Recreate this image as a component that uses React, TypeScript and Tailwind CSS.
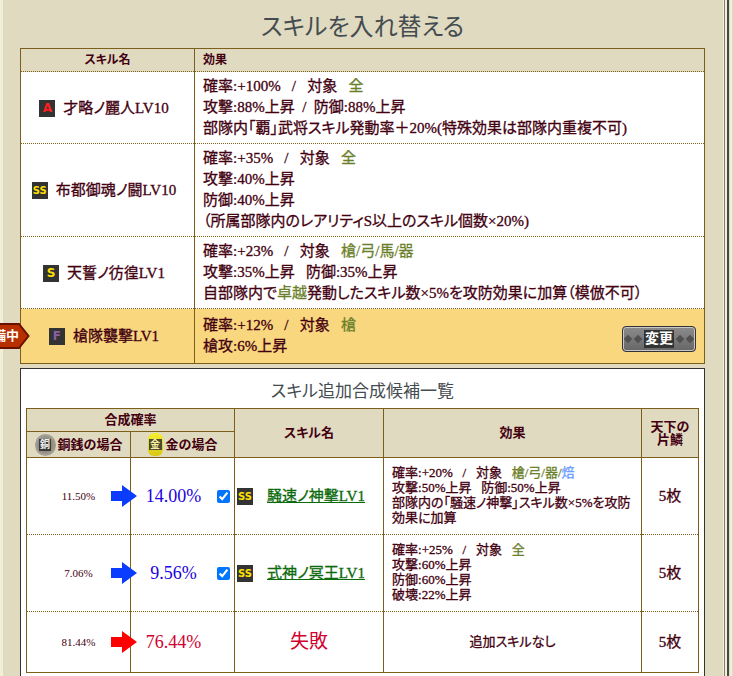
import type { ReactNode } from "react";

const rarityColor: Record<string, string> = {
  A: "text-[12px] text-[#ff2020]",
  SS: "text-[10px] text-[#ffe000]",
  S: "text-[12px] text-[#ffe000]",
  F: "text-[12px] text-[#8a5fa0]",
};

const border = "border-[#7b5f1a]";

function Badge({ rank }: { rank: string }) {
  return (
    <span
      className={`inline-flex h-[17px] w-[16px] shrink-0 items-center justify-center bg-[#333333] font-['DejaVu_Sans',sans-serif] font-bold [-webkit-text-stroke:0px] ${rarityColor[rank]}`}
    >
      {rank}
    </span>
  );
}

const Green = ({ children }: { children: ReactNode }) => <span className="text-[#6b7f2a]">{children}</span>;

function Arrow({ color }: { color: string }) {
  return (
    <svg width="26" height="22" viewBox="0 0 26 22" className="absolute right-[-7px] top-1/2 z-10 -translate-y-1/2">
      <path d="M0 6H11V0L26 11L11 22V16H0Z" fill={color} />
    </svg>
  );
}

function Coin({ kind }: { kind: "copper" | "gold" }) {
  if (kind === "copper") {
    return (
      <span className="inline-flex h-[22px] w-[21px] shrink-0 items-center justify-center rounded-full bg-[radial-gradient(circle,#8d867a_40%,#a8a39b_70%,#6e685e)]">
        <span className="flex h-[12px] w-[12px] items-center justify-center bg-[#3a3a34] text-[10px] leading-none font-bold text-[#f0f0f0]">
          銅
        </span>
      </span>
    );
  }
  return (
    <span className="inline-flex h-[23px] w-[15px] shrink-0 items-center justify-center rounded-[6px] bg-linear-to-b from-[#f8ee30] to-[#d8c810]">
      <span className="flex h-[11px] w-[13px] items-center justify-center bg-[#4a4a30] text-[10px] leading-none font-bold text-[#f8f0a0]">
        金
      </span>
    </span>
  );
}

function Diamonds() {
  return (
    <span className="flex gap-[4px]">
      <span className="h-[6px] w-[6px] rotate-45 bg-[#505050]" />
      <span className="h-[6px] w-[6px] rotate-45 bg-[#505050]" />
    </span>
  );
}

function SkillRow({ rank, name, h, children }: { rank: string; name: string; h: string; children: ReactNode }) {
  return (
    <tr className={`${h} border-t border-dotted ${border}`}>
      <td className={`border-r border-solid ${border} text-center`}>
        <span className="inline-flex items-center gap-[8px] pr-[7px]">
          <Badge rank={rank} />
          {name}
        </span>
      </td>
      <td className="pl-[8px]">{children}</td>
    </tr>
  );
}

function CandidateRow({
  low,
  high,
  color,
  arrow,
  checked,
  name,
  last,
  children,
  h,
}: {
  low: string;
  high: string;
  color: string;
  arrow: string;
  checked?: boolean;
  name?: ReactNode;
  last?: boolean;
  children: ReactNode;
  h: string;
}) {
  return (
    <tr className={`${h} ${last ? "" : `border-b border-dotted ${border}`}`}>
      <td className={`relative border-r border-solid ${border} text-center text-[11px] [-webkit-text-stroke:0px]`}>
        {low}
        <Arrow color={arrow} />
      </td>
      <td className={`border-r border-solid ${border}`}>
        <div className="flex items-center">
          <span className={`w-[85px] text-center text-[18px] [-webkit-text-stroke:0px] ${color}`}>{high}</span>
          {checked && <input type="checkbox" defaultChecked className="ml-[1px] h-[13px] w-[13px]" />}
        </div>
      </td>
      <td className={`border-r border-solid ${border}`}>{name}</td>
      <td className={`border-r border-solid ${border} pb-[2px] pl-[8px] text-[13px] leading-[15px]`}>{children}</td>
      <td className="text-center text-[15px]">5枚</td>
    </tr>
  );
}

function SkillLink({ name }: { name: string }) {
  return (
    <div className="flex items-center gap-[14px] pl-[2px]">
      <Badge rank="SS" />
      <a href="#" className="text-[15px] whitespace-nowrap text-[#0b6a0b] underline">
        {name}
      </a>
    </div>
  );
}

export default function App() {
  return (
    <div className="relative flex h-[676px] w-[733px] overflow-hidden bg-[#dfdac0] font-['Liberation_Serif','Noto_Sans_CJK_JP',serif] text-[#430010] [font-feature-settings:'palt'] [-webkit-text-stroke:0.3px]">
      <div className="w-[3px] shrink-0 bg-[#f0efd8]" />
      <main className="w-[702px] pl-[17px]">
        <h1 className="h-[48px] pt-[9px] text-center text-[24px] leading-[36px] font-normal text-[#444c50] [-webkit-text-stroke:0px]">
          スキルを入れ替える
        </h1>

        <table className={`w-[685px] table-fixed border-collapse border ${border} text-[15px] leading-[21px]`}>
          <thead>
            <tr className="h-[23px] text-[12px]">
              <th className={`w-[174px] border-r ${border} font-bold [-webkit-text-stroke:0px]`}>スキル名</th>
              <th className="pl-[8px] text-left font-bold [-webkit-text-stroke:0px]">効果</th>
            </tr>
          </thead>
          <tbody className="bg-white">
            <SkillRow rank="A" name="才略ノ麗人LV10" h="h-[72px]">
              確率:+100%&nbsp;&nbsp;&nbsp;/&nbsp;&nbsp;&nbsp;対象&nbsp;&nbsp;&nbsp;<Green>全</Green>
              <br />
              攻撃:88%上昇&nbsp;&nbsp;/&nbsp;&nbsp;防御:88%上昇
              <br />
              部隊内「覇」武将スキル発動率＋20%(特殊効果は部隊内重複不可)
            </SkillRow>
            <SkillRow rank="SS" name="布都御魂ノ闘LV10" h="h-[93px]">
              確率:+35%&nbsp;&nbsp;&nbsp;/&nbsp;&nbsp;&nbsp;対象&nbsp;&nbsp;&nbsp;<Green>全</Green>
              <br />
              攻撃:40%上昇
              <br />
              防御:40%上昇
              <br />
              （所属部隊内のレアリティS以上のスキル個数×20%)
            </SkillRow>
            <SkillRow rank="S" name="天誓ノ彷徨LV1" h="h-[72px]">
              確率:+23%&nbsp;&nbsp;&nbsp;/&nbsp;&nbsp;&nbsp;対象&nbsp;&nbsp;&nbsp;<Green>槍/弓/馬/器</Green>
              <br />
              攻撃:35%上昇&nbsp;&nbsp;&nbsp;防御:35%上昇
              <br />
              自部隊内で<Green>卓越</Green>発動したスキル数×5%を攻防効果に加算（模倣不可）
            </SkillRow>
            <tr className={`h-[55px] border-t border-dotted ${border} bg-[#f8d77f]`}>
              <td className={`border-r border-solid ${border} text-center`}>
                <span className="inline-flex items-center gap-[8px] pr-[7px]">
                  <Badge rank="F" />
                  槍隊襲撃LV1
                </span>
              </td>
              <td className="pl-[8px]">
                <div className="flex items-end justify-between pr-[8px]">
                  <div>
                    確率:+12%&nbsp;&nbsp;&nbsp;/&nbsp;&nbsp;&nbsp;対象&nbsp;&nbsp;&nbsp;<Green>槍</Green>
                    <br />
                    槍攻:6%上昇
                  </div>
                  <button className="mb-[5px] flex h-[26px] w-[74px] items-center justify-center gap-[3px] rounded-[4px] border border-[#333333] bg-linear-to-b from-[#8c8c8c] to-[#666666] text-[14px] font-bold text-white shadow-[inset_0_0_0_1px_#c8c8c8] [-webkit-text-stroke:0px]">
                    <Diamonds />
                    <span className="bg-[#333333] px-[1px] leading-[18px]">変更</span>
                    <Diamonds />
                  </button>
                </div>
              </td>
            </tr>
          </tbody>
        </table>

        <section className="mt-[4px] w-[685px] border border-[#333333] bg-white px-[5px] pb-[20px]">
          <h2 className="h-[39px] pt-[11px] text-center text-[17px] leading-[24px] font-normal text-[#444c50] [-webkit-text-stroke:0px]">
            スキル追加合成候補一覧
          </h2>
          <table className={`w-[673px] table-fixed border-collapse border ${border} text-[13px]`}>
            <colgroup>
              <col className="w-[104px]" />
              <col className="w-[104px]" />
              <col className="w-[149px]" />
              <col className="w-[258px]" />
              <col />
            </colgroup>
            <thead className="bg-[#dfdac0] [&_th]:font-bold [&_th]:[-webkit-text-stroke:0px]">
              <tr className="h-[23px]">
                <th colSpan={2} className={`border-r border-b ${border}`}>
                  合成確率
                </th>
                <th rowSpan={2} className={`border-r ${border}`}>
                  スキル名
                </th>
                <th rowSpan={2} className={`border-r ${border}`}>
                  効果
                </th>
                <th rowSpan={2} className="text-[13px] leading-[13px]">
                  天下の
                  <br />
                  片鱗
                </th>
              </tr>
              <tr className="h-[26px]">
                <th className={`border-r ${border}`}>
                  <span className="flex items-center justify-center gap-[2px] whitespace-nowrap">
                    <Coin kind="copper" />
                    銅銭の場合
                  </span>
                </th>
                <th className={`border-r ${border}`}>
                  <span className="flex items-center justify-center gap-[3px] whitespace-nowrap">
                    <Coin kind="gold" />
                    金の場合
                  </span>
                </th>
              </tr>
            </thead>
            <tbody className={`border-t ${border}`}>
              <CandidateRow
                h="h-[77px]"
                low="11.50%"
                high="14.00%"
                color="text-[#2200e0]"
                arrow="#0a3cff"
                checked
                name={<SkillLink name="騒速ノ神撃LV1" />}
              >
                確率:+20%&nbsp;&nbsp;&nbsp;/&nbsp;&nbsp;&nbsp;対象&nbsp;&nbsp;&nbsp;<Green>槍/弓/器/</Green>
                <span className="text-[#6699ff]">焙</span>
                <br />
                攻撃:50%上昇&nbsp;&nbsp;&nbsp;防御:50%上昇
                <br />
                部隊内の「騒速ノ神撃」スキル数×5%を攻防
                <br />
                効果に加算
              </CandidateRow>
              <CandidateRow
                h="h-[77px]"
                low="7.06%"
                high="9.56%"
                color="text-[#2200e0]"
                arrow="#0a3cff"
                checked
                name={<SkillLink name="式神ノ冥王LV1" />}
              >
                確率:+25%&nbsp;&nbsp;&nbsp;/&nbsp;&nbsp;&nbsp;対象&nbsp;&nbsp;&nbsp;<Green>全</Green>
                <br />
                攻撃:60%上昇
                <br />
                防御:60%上昇
                <br />
                破壊:22%上昇
              </CandidateRow>
              <CandidateRow
                h="h-[61px]"
                low="81.44%"
                high="76.44%"
                color="text-[#d00030]"
                arrow="#ff0000"
                last
                name={<div className="text-center text-[19px] text-[#d00030] [-webkit-text-stroke:0px]">失敗</div>}
              >
                <div className="pr-[8px] text-center">追加スキルなし</div>
              </CandidateRow>
            </tbody>
          </table>
        </section>
      </main>
      <div className="ml-[18px] h-full w-[1px] shrink-0 bg-[#f0efd8]" />
      <div className="h-full w-[1px] shrink-0 bg-[#8a7a70]" />
      <div className="h-full w-[2px] shrink-0 bg-[#f0efd8]" />
      <div className="h-full w-[2px] shrink-0 bg-[#444a4a]" />
      <div className="h-full w-[1px] shrink-0 bg-[#dfdac0]" />
      <div className="h-full w-[2px] shrink-0 bg-[#f0efd8]" />

      <div className="absolute left-0 top-[323px] h-[26px] w-[30px] overflow-hidden">
        <svg width="30" height="26" viewBox="0 0 30 26" className="absolute inset-0">
          <path d="M-2 1H19L28.5 13L19 25H-2Z" fill="#b83000" stroke="#6b1000" strokeWidth="2" />
        </svg>
        <span className="absolute right-[11px] top-[3px] whitespace-nowrap text-[13px] leading-[20px] font-bold text-white [-webkit-text-stroke:0px]">
          備中
        </span>
      </div>
    </div>
  );
}
